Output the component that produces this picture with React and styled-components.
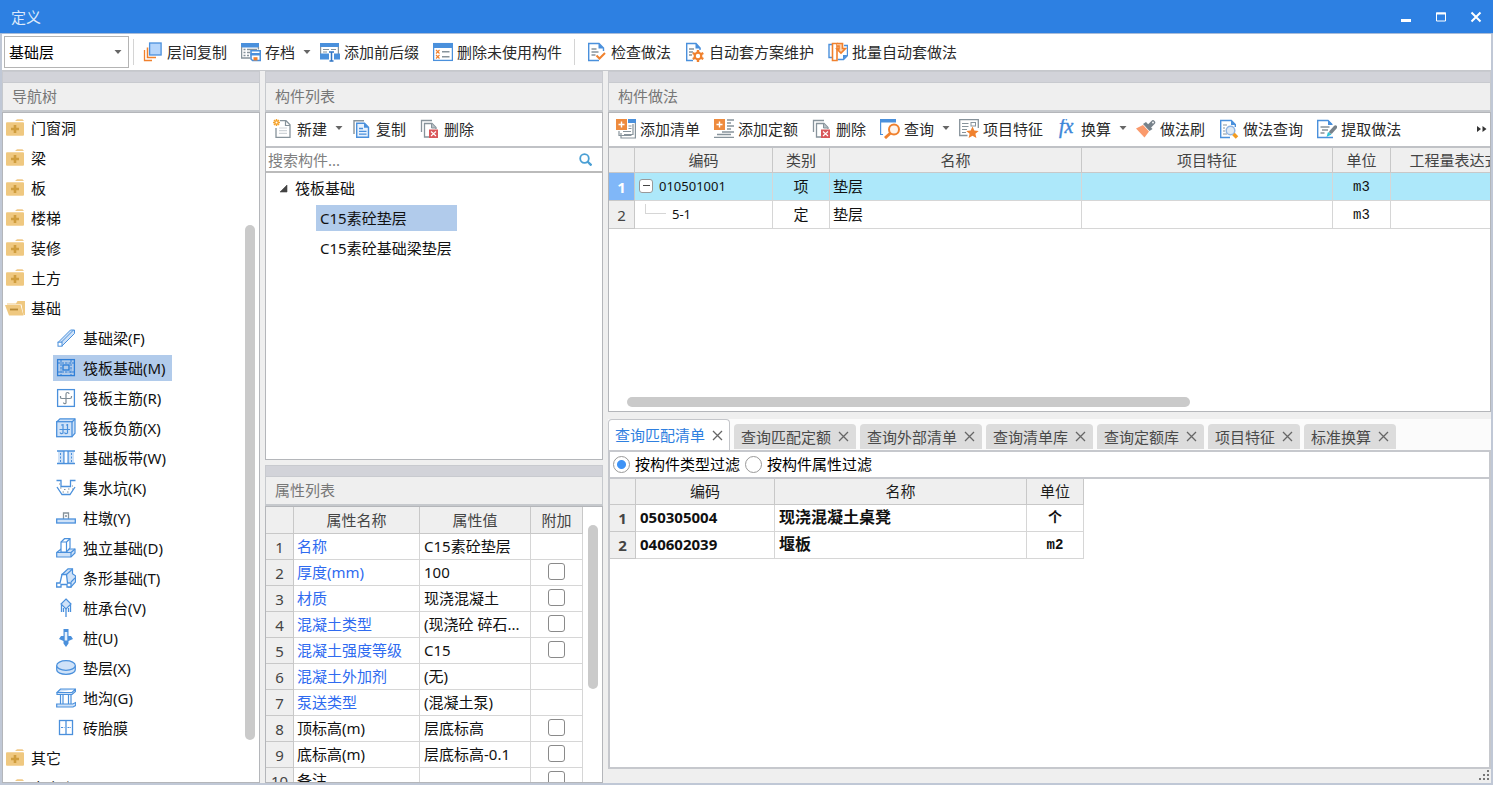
import React, { useState } from 'react'
import styled, { createGlobalStyle } from 'styled-components'

const BLUE = '#4a90dc'
const ORANGE = '#f0812e'
const GRAY = '#87939b'
const PALE = '#cfe2f8'

/* ---------- icons ---------- */

const Svg = ({ size = 20, children }) => (
  <svg width={size} height={size} viewBox="0 0 20 20" fill="none" aria-hidden="true">{children}</svg>
)

const Trash = () => (
  <>
    <path d="M1.5 13V1.5H12" stroke={GRAY} strokeWidth="1.3" />
    <path d="M9 18H4.5V4.5H12L16 8.5V10" stroke={GRAY} strokeWidth="1.3" />
    <path d="M11.5 4.5V9H16" stroke={GRAY} fill="#b9c1c6" />
    <rect x="9" y="10.500" width="9" height="8.500" fill="#d9575b" />
    <path d="M11 12.500l5 4.500M16 12.500l-5 4.500" stroke="#fff" strokeWidth="1.1" />
  </>
)

const icons = {
  floorCopy: (
    <>
      <path d="M1.500 8v10.500H9" stroke={ORANGE} strokeWidth="1.300" />
      <path d="M4.500 5.500V15.500H13" stroke={ORANGE} strokeWidth="1.500" />
      <rect x="6.600" y="1" width="11.500" height="12" fill="#b5d5fb" stroke={BLUE} strokeWidth="1.300" />
    </>
  ),
  archive: (
    <>
      <rect x="0" y="1" width="18" height="4.500" fill={BLUE} />
      <path d="M.6 5v11H9M17.400 5v2.500" stroke={GRAY} strokeWidth="1.300" />
      <path d="M2.500 7.500h2M6 7.500h10M2.500 10.500h2M6 10.500h3M2.500 13.500h2M6 13.500h2" stroke={GRAY} strokeWidth="1.400" />
      <path d="M10 8.800h9.300v9.700h-7.700L10 17z" fill="#fff" stroke={BLUE} strokeWidth="1.600" />
      <path d="M10 13h9v-1.500h-9z" fill={BLUE} stroke={BLUE} />
      <rect x="12.500" y="15.200" width="4" height="3.300" fill={ORANGE} />
    </>
  ),
  affix: (
    <>
      <rect x="0" y="1" width="19" height="4" fill={BLUE} />
      <path d="M.6 5v7M18.400 5v7" stroke={GRAY} strokeWidth="1.200" />
      <path d="M3 7.500h6M11 7.500h5M3 10h4" stroke={GRAY} strokeWidth="1.200" />
      <rect x="0" y="11.500" width="9" height="6" fill={BLUE} />
      <rect x="14" y="11.500" width="6" height="6" fill={BLUE} />
      <path d="M9 10h5M11.500 10v9M9.500 19h4" stroke="#2f74c4" strokeWidth="1.500" />
    </>
  ),
  unused: (
    <>
      <rect x=".6" y="1.600" width="18.800" height="16.800" stroke={BLUE} strokeWidth="1.300" />
      <rect x="0" y="1" width="20" height="5" fill={BLUE} />
      <path d="M3 8l3.500 3.500M6.500 8L3 11.500M3 13l3.500 3.500M6.500 13L3 16.500" stroke={ORANGE} strokeWidth="1.100" />
      <path d="M9 9.700h7.500M9 14.700h7.500" stroke={GRAY} strokeWidth="1.400" />
    </>
  ),
  check: (
    <>
      <path d="M16.500 9V6L12 1.500H1.700v17H12" stroke={BLUE} strokeWidth="1.400" />
      <path d="M11.500 1v5.500H17z" fill={BLUE} />
      <path d="M4.500 7h5M4.500 10h7M4.500 13h4" stroke={GRAY} strokeWidth="1.300" />
      <path d="M9.500 13.500l3 3 5.500-5.500" stroke={ORANGE} strokeWidth="2" />
    </>
  ),
  scheme: (
    <>
      <path d="M15 8V6l-4-4.500H1.700v17H8" stroke={BLUE} strokeWidth="1.400" />
      <path d="M10.500 1v5.500H16z" fill={BLUE} />
      <path d="M4 7h5M4 10h4M4 13h3" stroke={GRAY} strokeWidth="1.300" />
      <circle cx="13" cy="14" r="3.300" stroke={ORANGE} strokeWidth="2.200" />
      <path d="M13 8v2.500M13 17.500V20M7.800 11l2.200 1.300M16 15.700l2.300 1.300M7.800 17l2.200-1.300M16 12.300l2.300-1.300" stroke={ORANGE} strokeWidth="2.400" />
    </>
  ),
  batch: (
    <>
      <path d="M4 2.500h-3v13h3" stroke={BLUE} strokeWidth="1.400" />
      <path d="M16 3.500h3.500v10l-4 4H9.500" stroke={BLUE} strokeWidth="1.400" />
      <path d="M19.500 13H15v4.500z" fill={BLUE} />
      <path d="M4.500 1.500h4.500v17H4.500z" stroke={ORANGE} strokeWidth="1.600" />
      <path d="M9 1.500h5.500v5h3l-4.500 4.500-4-4h2V4H9" stroke={ORANGE} strokeWidth="1.600" fill="#fbd2b0" />
    </>
  ),
  create: (
    <>
      <path d="M7 1.700h6l4 4v12.600H3V9" stroke={GRAY} strokeWidth="1.300" />
      <path d="M12.500 2v4.500H17" stroke={GRAY} strokeWidth="1.200" />
      <path d="M6 9h8M6 11.700h8M6 14.400h8" stroke="#cfd4d8" strokeWidth="1.200" />
      <path d="M3.500 0v7M0 3.500h7M1 1l5 5M6 1L1 6" stroke="#f5a32c" strokeWidth="1.500" />
      <circle cx="3.500" cy="3.500" r="1" fill="#fff" />
    </>
  ),
  copy: (
    <>
      <path d="M2 15V1.700h10" stroke={GRAY} strokeWidth="1.400" />
      <path d="M4.700 4.200h7.800l4 4v10.100H4.700z" fill="#e8f2fd" stroke={BLUE} strokeWidth="1.400" />
      <path d="M12 4v4.700h4.700z" fill={BLUE} />
      <path d="M7 9.500h4M7 12.300h7.500M7 15.100h7.500" stroke={BLUE} strokeWidth="1.300" />
    </>
  ),
  remove: <Trash />,
  addList: (
    <>
      <rect x="12" y="0" width="8" height="4" fill={BLUE} />
      <path d="M17 5v10.500H8M19.400 4v15H5V14" stroke={GRAY} strokeWidth="1.200" />
      <path d="M3 12v4.500h12.500" stroke={GRAY} strokeWidth="1.200" />
      <path d="M12.500 7h3M12.500 9.500h3M7 12.500h8" stroke={GRAY} strokeWidth="1.100" />
      <rect x="0" y="0" width="11" height="11" fill="#ee8b3e" />
      <path d="M5.500 2.500v6M2.500 5.500h6" stroke="#fff" strokeWidth="1.400" />
    </>
  ),
  addQuota: (
    <>
      <path d="M13 1h7M13 4h4M13 7h7M13 10h4M8 13h12M3 15.500h14M0 18.300h20" stroke={GRAY} strokeWidth="1.300" />
      <rect x="0" y="0" width="11" height="11" fill="#ee8b3e" />
      <path d="M5.500 2.500v6M2.500 5.500h6" stroke="#fff" strokeWidth="1.400" />
    </>
  ),
  query: (
    <>
      <rect x="0" y="0" width="16" height="3.500" fill={BLUE} />
      <path d="M.6 3v12.500H3" stroke={BLUE} strokeWidth="1.200" />
      <circle cx="14" cy="10.500" r="5" stroke={ORANGE} strokeWidth="2" fill="#fff4eb" />
      <path d="M10.500 14l-5.500 5" stroke={ORANGE} strokeWidth="3" />
    </>
  ),
  feature: (
    <>
      <path d="M8.500 16.500H.7V.7h18.600V9" stroke={GRAY} strokeWidth="1.300" />
      <path d="M3 4.500h6.500M3 7.500h6.500M3 10.500h5M3 13.500h4" stroke={GRAY} strokeWidth="1.200" />
      <rect x="12" y="3.500" width="4.500" height="3.500" stroke={GRAY} />
      <path d="M13.500 7.500l1.800 4 4.400.4-3.300 2.900 1 4.300-3.900-2.300-3.900 2.300 1-4.300-3.300-2.900 4.400-.4z" fill={ORANGE} />
    </>
  ),
  fx: (
    <text x="2" y="14" fill="#3c86d8" stroke="#3c86d8" strokeWidth=".4" fontFamily="Liberation Serif, serif" fontStyle="italic" fontSize="20">fx</text>
  ),
  brush: (
    <>
      <path d="M0 9.500l7-3.500 6 6.500-4.500 6z" fill="#fa9a6c" />
      <path d="M7 5l3-2 6.500 7-3 2z" fill="#77828a" />
      <path d="M13 7.500L17 3.500" stroke="#77828a" strokeWidth="4.500" strokeLinecap="round" />
      <circle cx="17" cy="3.500" r=".9" fill="#fff" />
    </>
  ),
  workQuery: (
    <>
      <path d="M16.300 8V5.500l-4-4H1.700v17H11" stroke={BLUE} strokeWidth="1.400" />
      <path d="M12 1v5h5z" fill={BLUE} />
      <path d="M4 6h4M4 9h2M4 12h2M4 15h4" stroke={GRAY} strokeWidth="1.200" />
      <circle cx="11.500" cy="11.500" r="4.300" fill="#dfe9f4" stroke="#8fb4e2" strokeWidth="1.500" />
      <path d="M14.500 15l3.500 3.500" stroke="#f29a1f" strokeWidth="3.500" />
    </>
  ),
  extract: (
    <>
      <path d="M15 5.500l-4-4H.7v17H16" stroke={BLUE} strokeWidth="1.400" />
      <path d="M11 1v5h5z" fill={BLUE} />
      <path d="M3.500 8h9M5 11h6M3.500 14h4" stroke={GRAY} strokeWidth="1.300" />
      <path d="M14 13l4.500-5" stroke="#77828a" strokeWidth="3.500" strokeLinecap="round" />
      <path d="M9.500 18l1.500-5 3.500 2.500z" fill="#2cc4d6" />
    </>
  ),
  folder: (
    <>
      <path d="M10 3l2-1.700h5.500L19 3z" fill="#f0c987" />
      <rect x="1" y="4.200" width="18" height="13.500" rx="1" fill="#efc880" />
      <path d="M10 7v8M6 11h8" stroke="#cf9d3e" strokeWidth="2.600" />
    </>
  ),
  folderOpen: (
    <>
      <path d="M2 5.500h9l1.500-2.500H20v14h-1.500L16.500 6.500H2z" fill="#efc880" />
      <path d="M0 7h15.500l3 10.500H4z" fill="#efc880" />
      <path d="M5 11.500h8" stroke="#b88a36" strokeWidth="1.800" />
    </>
  ),
  beam: (
    <>
      <path d="M2 14.500L14.500 2h4v3.500L6 18" fill={PALE} stroke={BLUE} />
      <path d="M5 14.500L17.500 2" stroke={BLUE} />
      <rect x="2" y="14.200" width="4" height="4" fill="#fff" stroke={BLUE} />
    </>
  ),
  raft: (
    <>
      <rect x="1.600" y="1.600" width="16.800" height="16" stroke="#2f7fd8" strokeWidth="1.300" />
      <path d="M5 2v15M15 2v15M2 5h16M2 14h16" stroke="#2f7fd8" strokeDasharray="2.500 1" />
      <rect x="7" y="7" width="6" height="5" stroke="#2f7fd8" strokeWidth="1.400" />
    </>
  ),
  mainBar: (
    <>
      <rect x="1.600" y="1.600" width="16.800" height="16.800" fill="#fff" stroke={BLUE} strokeWidth="1.300" />
      <path d="M10 15.500V6q0-1.500 1.500-1.500T13 6M4.500 8v1.500q0 1 1.500 1h8q1.500 0 1.500-1.500V8M7.500 14.500q0 1.500 2.500 1" stroke="#7e8c96" strokeWidth="1.200" />
    </>
  ),
  negBar: (
    <>
      <path d="M.7 4L4 .8h15v14.400l-3 3.500" fill={PALE} stroke={BLUE} strokeWidth="1.200" />
      <rect x=".7" y="3.700" width="15.300" height="15" fill={PALE} stroke={BLUE} strokeWidth="1.300" />
      <path d="M16 4l3-3M7 6v9q-2 1.500-3-.5M11.500 6v9q-2 1.500-3-.5M3.500 11.500H14M5 7h2M10 7h1.500" stroke={BLUE} strokeWidth="1.200" />
    </>
  ),
  strip: (
    <>
      <rect x="2" y="3" width="16" height="12.500" fill={PALE} />
      <path d="M1 3h18M1 15.500h18M8 3v12.500M12 3v12.500" stroke={BLUE} strokeWidth="1.400" />
      <path d="M4.500 5v10M15.500 5v10" stroke={BLUE} strokeDasharray="2 1.500" />
      <rect x="8.700" y="3.700" width="2.600" height="11" fill="#fff" />
    </>
  ),
  pit: (
    <>
      <path d="M.5 2.500H5v6h9.500v-6h5M1 9l5 7.500h8L19 9" stroke={BLUE} strokeWidth="1.300" />
      <path d="M3 6h1M4 10h1.500M8 11.500h1.500M12 11h1.500M16 8h1M6.500 14h1.500M11 14h1.500M16 11h1" stroke={GRAY} />
    </>
  ),
  pier: (
    <>
      <path d="M7.500 11V5h5v6M9 8h2" stroke={GRAY} strokeWidth="1.300" />
      <rect x=".7" y="11" width="18.600" height="4" fill={PALE} stroke={BLUE} strokeWidth="1.300" />
    </>
  ),
  isolated: (
    <>
      <path d="M.7 14.500L5 11h14v4l-4 4H.7z" fill={PALE} stroke={BLUE} strokeWidth="1.200" />
      <path d="M.7 14.500H15V19M15 14.500l4-3.500" stroke={BLUE} strokeWidth="1.200" />
      <path d="M5 14V4L8.500.7H14V10l-3.500 4z" fill="#fff" stroke={BLUE} strokeWidth="1.200" />
      <path d="M5 4h5.500v10M10.500 4L14 .8" stroke={BLUE} strokeWidth="1.200" />
    </>
  ),
  stripBase: (
    <>
      <path d="M5.500 7L12 .8h4.500v5l3 2v6L15 19h-3" fill={PALE} stroke={BLUE} strokeWidth="1.200" />
      <path d="M.7 19v-4H4L6 6.500h4.500l1 8.500H15v4H11v-2.500H5V19z" fill="#fff" stroke={BLUE} strokeWidth="1.300" />
      <path d="M10.500 6.500L16.500 1M15 14l4-4" stroke={BLUE} strokeWidth="1.100" />
    </>
  ),
  cap: (
    <>
      <path d="M10 1l5 5-5 5-5-5z" fill={PALE} stroke={BLUE} strokeWidth="1.200" />
      <path d="M5.500 7v7M10 11v8M14.500 7v7M7.500 10v4M12.500 10v4" stroke={BLUE} strokeWidth="1.300" />
    </>
  ),
  pile: (
    <>
      <path d="M7.500 1h5v7h2.500l2 3-4.500 2v2.500L10 19l-2.500-3.500V13L3 11l2-3h2.500z" fill={BLUE} />
      <path d="M10 4v8.500" stroke="#e7f1fc" strokeWidth="2.600" />
    </>
  ),
  cushion: (
    <>
      <path d="M.7 7.500v4c0 6.500 18.600 6.500 18.600 0v-4" fill={PALE} stroke={BLUE} strokeWidth="1.200" />
      <ellipse cx="10" cy="7.500" rx="9.300" ry="4.800" fill={PALE} stroke={BLUE} strokeWidth="1.200" />
    </>
  ),
  trench: (
    <>
      <path d="M1 4.500L4.500 1h15L16 4.500zM1 4.500v2h15l3.500-3V1" fill={PALE} stroke={BLUE} strokeWidth="1.200" />
      <path d="M4.500 7v9M7 7v9M12.500 7v9M15 6v10" stroke={BLUE} strokeWidth="1.200" />
      <path d="M.7 16h16l3-1.500v3L17 19H.7z" fill={PALE} stroke={BLUE} strokeWidth="1.200" />
    </>
  ),
  brick: (
    <>
      <rect x="3.500" y="2.500" width="13" height="14" stroke={BLUE} strokeWidth="1.300" />
      <path d="M10 2.500v14" stroke={BLUE} strokeWidth="1.300" />
      <path d="M5 9.500h3.500M11.500 9.500H15" stroke={BLUE} strokeWidth="1.200" strokeDasharray="2 .8" />
    </>
  )
}

const Icon = ({ name, size }) => <Svg size={size}>{icons[name]}</Svg>

const Caret = () => (
  <svg width="8" height="5" viewBox="0 0 8 5" aria-hidden="true"><path d="M.5 0h7L4 4z" fill="#666" /></svg>
)

/* ---------- data ---------- */

const mainTools = [
  { icon: 'floorCopy', label: '层间复制' },
  { icon: 'archive', label: '存档', menu: true },
  { icon: 'affix', label: '添加前后缀' },
  { icon: 'unused', label: '删除未使用构件' },
  { separator: true },
  { icon: 'check', label: '检查做法' },
  { icon: 'scheme', label: '自动套方案维护' },
  { icon: 'batch', label: '批量自动套做法' }
]

const listTools = [
  { icon: 'create', label: '新建', menu: true },
  { icon: 'copy', label: '复制' },
  { icon: 'remove', label: '删除' }
]

const workTools = [
  { icon: 'addList', label: '添加清单' },
  { icon: 'addQuota', label: '添加定额' },
  { icon: 'remove', label: '删除' },
  { icon: 'query', label: '查询', menu: true },
  { icon: 'feature', label: '项目特征' },
  { icon: 'fx', label: '换算', menu: true },
  { icon: 'brush', label: '做法刷' },
  { icon: 'workQuery', label: '做法查询' },
  { icon: 'extract', label: '提取做法' }
]

const navTree = [
  { label: '门窗洞' },
  { label: '梁' },
  { label: '板' },
  { label: '楼梯' },
  { label: '装修' },
  { label: '土方' },
  {
    label: '基础',
    children: [
      ['beam', '基础梁(F)'],
      ['raft', '筏板基础(M)'],
      ['mainBar', '筏板主筋(R)'],
      ['negBar', '筏板负筋(X)'],
      ['strip', '基础板带(W)'],
      ['pit', '集水坑(K)'],
      ['pier', '柱墩(Y)'],
      ['isolated', '独立基础(D)'],
      ['stripBase', '条形基础(T)'],
      ['cap', '桩承台(V)'],
      ['pile', '桩(U)'],
      ['cushion', '垫层(X)'],
      ['trench', '地沟(G)'],
      ['brick', '砖胎膜']
    ]
  },
  { label: '其它' },
  { label: '自定义' }
]

const properties = [
  { name: '名称', value: 'C15素砼垫层', linked: true },
  { name: '厚度(mm)', value: '100', linked: true, extra: true },
  { name: '材质', value: '现浇混凝土', linked: true, extra: true },
  { name: '混凝土类型', value: '(现浇砼 碎石...', linked: true, extra: true },
  { name: '混凝土强度等级', value: 'C15', linked: true, extra: true },
  { name: '混凝土外加剂', value: '(无)', linked: true },
  { name: '泵送类型', value: '(混凝土泵)', linked: true },
  { name: '顶标高(m)', value: '层底标高', extra: true },
  { name: '底标高(m)', value: '层底标高-0.1', extra: true },
  { name: '备注', value: '', extra: true }
]

const matches = [
  ['050305004', '现浇混凝土桌凳', '个'],
  ['040602039', '堰板', 'm2']
]

const tabs = ['查询匹配清单', '查询匹配定额', '查询外部清单', '查询清单库', '查询定额库', '项目特征', '标准换算']

/* ---------- parts ---------- */

const Tools = ({ items }) =>
  items.map((item, i) =>
    item.separator ? (
      <Separator key={i} />
    ) : (
      <ToolButton key={item.label} type="button" $menu={item.menu}>
        <Icon name={item.icon} />
        {item.label}
        {item.menu && <MenuMark><Caret /></MenuMark>}
      </ToolButton>
    )
  )

const NavTree = () => {
  const [selected, setSelected] = useState('筏板基础(M)')
  return (
    <TreeList>
      {navTree.map(node => (
        <li key={node.label}>
          <TreeRow>
            <FolderButton type="button">
              <Icon name={node.children ? 'folderOpen' : 'folder'} />
              {node.label}
            </FolderButton>
          </TreeRow>
          {node.children && (
            <TreeList>
              {node.children.map(([icon, label]) => (
                <TreeRow as="li" key={label} $indent={50}>
                  <LeafButton type="button" $selected={selected === label} onClick={() => setSelected(label)}>
                    <Icon name={icon} />
                    {label}
                  </LeafButton>
                </TreeRow>
              ))}
            </TreeList>
          )}
        </li>
      ))}
    </TreeList>
  )
}

const ComponentList = () => {
  const [selected, setSelected] = useState('C15素砼垫层')
  return (
    <ListBody>
      <TreeRow $indent={13}>
        <svg width="9" height="9" viewBox="0 0 9 9" aria-hidden="true"><path d="M8 1v7H1z" fill="#444" stroke="#444" strokeWidth=".6" /></svg>
        <GroupName>筏板基础</GroupName>
      </TreeRow>
      {['C15素砼垫层', 'C15素砼基础梁垫层'].map(name => (
        <TreeRow key={name} $indent={50}>
          <ComponentButton type="button" $selected={selected === name} onClick={() => setSelected(name)}>{name}</ComponentButton>
        </TreeRow>
      ))}
    </ListBody>
  )
}

const PropertyTable = () => (
  <Table $width="317px">
    <colgroup>
      <col width="28" /><col width="126" /><col width="111" /><col width="52" />
    </colgroup>
    <thead>
      <tr>
        <HeadCell $h={27} /><HeadCell>属性名称</HeadCell><HeadCell>属性值</HeadCell><HeadCell>附加</HeadCell>
      </tr>
    </thead>
    <tbody>
      {properties.map((p, i) => (
        <tr key={p.name}>
          <RowHead $h={26}>{i + 1}</RowHead>
          <Cell $linked={p.linked} $tight>{p.name}</Cell>
          <Cell>{p.value}</Cell>
          <Cell $center>{p.extra && <CheckBox type="checkbox" aria-label={`${p.name} 附加`} />}</Cell>
        </tr>
      ))}
    </tbody>
  </Table>
)

const WorkTable = () => (
  <Table $width="910px">
    <colgroup>
      <col width="26" /><col width="138" /><col width="57" /><col width="252" /><col width="251" /><col width="58" /><col width="128" />
    </colgroup>
    <thead>
      <tr>
        <HeadCell $h={25} /><HeadCell>编码</HeadCell><HeadCell>类别</HeadCell><HeadCell>名称</HeadCell>
        <HeadCell>项目特征</HeadCell><HeadCell>单位</HeadCell><HeadCell>工程量表达式</HeadCell>
      </tr>
    </thead>
    <tbody>
      <ActiveRow>
        <RowHead $h={28} $active>1</RowHead>
        <Cell>
          <CodeLine>
            <Toggle type="button" aria-label="折叠">
              <svg width="7" height="1" aria-hidden="true"><rect width="7" height="1" fill="#444" /></svg>
            </Toggle>
            <Code>010501001</Code>
          </CodeLine>
        </Cell>
        <Cell $center>项</Cell><Cell $tight>垫层</Cell><Cell /><Cell $center><Unit>m3</Unit></Cell><Cell />
      </ActiveRow>
      <tr>
        <RowHead $h={28}>2</RowHead>
        <Cell>
          <CodeLine>
            <Elbow />
            <Code>5-1</Code>
          </CodeLine>
        </Cell>
        <Cell $center>定</Cell><Cell $tight>垫层</Cell><Cell /><Cell $center><Unit>m3</Unit></Cell><Cell />
      </tr>
    </tbody>
  </Table>
)

const MatchTable = () => (
  <Table $width="474px">
    <colgroup>
      <col width="26" /><col width="139" /><col width="252" /><col width="57" />
    </colgroup>
    <thead>
      <tr>
        <HeadCell $h={26} /><HeadCell $strong>编码</HeadCell><HeadCell $strong>名称</HeadCell><HeadCell $strong>单位</HeadCell>
      </tr>
    </thead>
    <tbody>
      {matches.map(([code, name, unit], i) => (
        <tr key={code}>
          <RowHead $h={27} $strong>{i + 1}</RowHead>
          <Cell $strong>{code}</Cell>
          <Cell $strong $large>{name}</Cell>
          <Cell $strong $center><Unit>{unit}</Unit></Cell>
        </tr>
      ))}
    </tbody>
  </Table>
)

const App = () => {
  const [tab, setTab] = useState(tabs[0])
  const [filter, setFilter] = useState('type')
  return (
    <Window>
      <GlobalStyle />
      <TitleBar>
        <Title>定义</Title>
        <WindowButton type="button" aria-label="最小化">
          <svg width="12" height="12" viewBox="0 0 12 12"><path d="M1 9.500h10" stroke="#fff" strokeWidth="3" /></svg>
        </WindowButton>
        <WindowButton type="button" aria-label="最大化">
          <svg width="12" height="12" viewBox="0 0 12 12"><path d="M1.500 2h9v8h-9z" fill="none" stroke="#fff" /><path d="M1 2.500h10" stroke="#fff" strokeWidth="2" /></svg>
        </WindowButton>
        <WindowButton type="button" aria-label="关闭">
          <svg width="12" height="12" viewBox="0 0 12 12"><path d="M1.500 1.500l9 9M10.500 1.500l-9 9" stroke="#fff" strokeWidth="2" /></svg>
        </WindowButton>
      </TitleBar>
      <Frame>
        <MainBar>
          <FloorPicker>
            <FloorSelect aria-label="楼层" defaultValue="基础层">
              <option>基础层</option>
            </FloorSelect>
            <Caret />
          </FloorPicker>
          <Separator $first />
          <Tools items={mainTools} />
        </MainBar>
        <Workspace>
          <Panel $basis="258px">
            <PanelStrip />
            <PanelTitle>导航树</PanelTitle>
            <PanelBody $row>
              <NavTree />
              <ScrollTrack $rows="112fr 516fr 42fr"><Thumb /></ScrollTrack>
            </PanelBody>
          </Panel>
          <Column $width="338px">
            <Panel $grow={389}>
              <PanelStrip />
              <PanelTitle>构件列表</PanelTitle>
              <PanelBody>
                <ToolRow><Tools items={listTools} /></ToolRow>
                <SearchBox>
                  <SearchInput type="search" placeholder="搜索构件..." aria-label="搜索构件" />
                  <svg width="13" height="13" viewBox="0 0 13 13" fill="none" aria-hidden="true">
                    <circle cx="5.500" cy="5.500" r="4.300" stroke="#4a9fd4" strokeWidth="1.800" />
                    <path d="M8.500 8.500l4 4" stroke="#4a9fd4" strokeWidth="2.400" />
                  </svg>
                </SearchBox>
                <ComponentList />
              </PanelBody>
            </Panel>
            <Gap $h={5} />
            <Panel $grow={318}>
              <PanelStrip />
              <PanelTitle>属性列表</PanelTitle>
              <PanelBody $row>
                <PropertyTable />
                <Spacer />
                <ScrollTrack $rows="18fr 166fr 94fr"><Thumb /></ScrollTrack>
              </PanelBody>
            </Panel>
          </Column>
          <Column>
            <Panel $grow={341}>
              <PanelStrip />
              <PanelTitle>构件做法</PanelTitle>
              <PanelBody>
                <ToolRow>
                  <Tools items={workTools} />
                  <MoreButton type="button" aria-label="更多">
                    <svg width="10" height="8" viewBox="0 0 10 8"><path d="M0 1l4 3-4 3zM5.500 1l4 3-4 3z" fill="#333" /></svg>
                  </MoreButton>
                </ToolRow>
                <WorkTable />
                <Spacer />
                <HorizontalTrack><Thumb /></HorizontalTrack>
              </PanelBody>
            </Panel>
            <Gap $h={7} />
            <TabPanel>
              <TabBar>
                {tabs.map(name => (
                  <Tab key={name} $active={tab === name}>
                    <TabButton type="button" onClick={() => setTab(name)}>{name}</TabButton>
                    <TabButton type="button" aria-label={`关闭 ${name}`}>
                      <svg width="11" height="11" viewBox="0 0 11 11"><path d="M1 1l9 9M10 1l-9 9" stroke="#666" strokeWidth="1.300" /></svg>
                    </TabButton>
                  </Tab>
                ))}
              </TabBar>
              <TabBody>
                <FilterBar>
                  <RadioLabel>
                    <Radio type="radio" name="filter" checked={filter === 'type'} onChange={() => setFilter('type')} />
                    按构件类型过滤
                  </RadioLabel>
                  <RadioLabel>
                    <Radio type="radio" name="filter" checked={filter === 'prop'} onChange={() => setFilter('prop')} />
                    按构件属性过滤
                  </RadioLabel>
                </FilterBar>
                <MatchTable />
              </TabBody>
            </TabPanel>
            <StatusBar>
              <svg width="11" height="11" viewBox="0 0 11 11" fill="#777" aria-hidden="true">
                <path d="M8 0h2v2H8zM4 4h2v2H4zM8 4h2v2H8zM0 8h2v2H0zM4 8h2v2H4zM8 8h2v2H8z" />
              </svg>
            </StatusBar>
          </Column>
        </Workspace>
      </Frame>
    </Window>
  )
}

export default App

/* ---------- styles ---------- */

const GlobalStyle = createGlobalStyle`
  * { box-sizing: border-box; }
  body {
    margin: 0;
    font-family: "Noto Sans", "Noto Sans CJK SC", sans-serif;
    font-size: 15px;
    line-height: 20px;
    color: #111;
  }
  button, input, select { font: inherit; color: inherit; }
  button { border: 0; padding: 0; background: none; white-space: nowrap; }
  svg { display: block; flex: none; }
`
const Window = styled.div`
  display: flex;
  flex-direction: column;
  height: 100vh;
  overflow: hidden;
`
const TitleBar = styled.header`
  display: flex;
  align-items: center;
  flex: none;
  height: 34px;
  background: #2d80e2;
  border-bottom: 1px solid #a9bcd8;
`
const Title = styled.h1`
  flex: 1;
  margin: 0;
  padding-left: 11px;
  font-size: 15px;
  font-weight: 400;
  color: #dbe9fb;
`
const WindowButton = styled.button`
  display: flex;
  justify-content: center;
  width: 35px;
`
const Frame = styled.div`
  display: flex;
  flex-direction: column;
  flex: 1;
  min-height: 0;
  border: solid #c0c8d6;
  border-width: 0 2px 2px;
  background: #efefef;
`
const MainBar = styled.div`
  display: flex;
  align-items: center;
  gap: 4px;
  flex: none;
  height: 37px;
  padding-left: 2px;
  background: #fff;
  border-bottom: 1px solid #c6c8cc;
`
const FloorPicker = styled.div`
  display: grid;
  grid-template-columns: 125px;
  align-items: center;
  > * { grid-area: 1 / 1; }
  > svg { justify-self: end; margin-right: 7px; pointer-events: none; }
`
const FloorSelect = styled.select`
  appearance: none;
  height: 32px;
  padding: 0 20px 0 4px;
  border: 1px solid #b4b4b4;
  border-radius: 0;
  background: #fff;
  color: #000;
`
const Separator = styled.span`
  width: 1px;
  height: 26px;
  margin: 0 ${p => (p.$first ? 0 : 3)}px;
  background: #d4d4d4;
`
const ToolButton = styled.button`
  display: flex;
  align-items: center;
  gap: 4px;
  flex: none;
  padding: 3px ${p => (p.$menu ? 0 : 5)}px 3px 5px;
  color: #2a2a2a;
`
const MenuMark = styled.span`
  padding-left: 4px;
`
const Workspace = styled.main`
  display: flex;
  gap: 5px;
  flex: 1;
  min-height: 0;
`
const Column = styled.div`
  display: flex;
  flex-direction: column;
  flex: ${p => (p.$width ? `0 0 ${p.$width}` : '1')};
  min-width: 0;
`
const Panel = styled.section`
  display: flex;
  flex-direction: column;
  flex: ${p => (p.$basis ? `0 0 ${p.$basis}` : `${p.$grow} 1 0`)};
  min-height: 0;
`
const PanelStrip = styled.div`
  flex: none;
  height: 12px;
  background: #d2d3d9;
  border: 1px solid #c8cacf;
`
const PanelTitle = styled.h2`
  flex: none;
  height: 29px;
  margin: 0;
  padding: 3px 9px;
  border: solid #c6c9cd;
  border-width: 0 1px 2px;
  font-size: 15px;
  font-weight: 400;
  color: #777;
`
const PanelBody = styled.div`
  display: flex;
  flex-direction: ${p => (p.$row ? 'row' : 'column')};
  flex: 1;
  min-height: 0;
  overflow: hidden;
  background: #fff;
  border: 1px solid #b4b6ba;
`
const Gap = styled.div`
  flex: none;
  height: ${p => p.$h}px;
`
const Spacer = styled.div`
  flex: 1;
`
const TreeList = styled.ul`
  flex: 1;
  margin: 0;
  padding: 0;
  list-style: none;
`
const TreeRow = styled.div`
  display: flex;
  align-items: center;
  height: 30px;
  padding-left: ${p => p.$indent || 2}px;
`
const FolderButton = styled.button`
  display: flex;
  align-items: center;
  gap: 6px;
`
const LeafButton = styled.button`
  display: flex;
  align-items: center;
  gap: 7px;
  height: 26px;
  padding: 0 6px 0 3px;
  background: ${p => (p.$selected ? '#b1cbeb' : 'none')};
`
const GroupName = styled.span`
  padding-left: 7px;
`
const ComponentButton = styled.button`
  height: 26px;
  min-width: 141px;
  padding: 0 4px;
  text-align: left;
  background: ${p => (p.$selected ? '#b1cbeb' : 'none')};
`
const ScrollTrack = styled.div`
  display: grid;
  grid-template-rows: ${p => p.$rows};
  flex: none;
  width: 14px;
  > * { grid-row: 2; width: 10px; }
`
const HorizontalTrack = styled.div`
  display: grid;
  grid-template-columns: 18fr 563fr 300fr;
  grid-template-rows: 10px;
  flex: none;
  height: 14px;
  > * { grid-column: 2; }
`
const Thumb = styled.span`
  border-radius: 5px;
  background: #cacaca;
`
const ToolRow = styled.div`
  display: flex;
  align-items: center;
  gap: 4px;
  flex: none;
  height: 35px;
  padding: 0 0 2px 2px;
  border-bottom: 2px solid #c0c2c6;
`
const MoreButton = styled.button`
  margin: 0 3px 0 auto;
`
const SearchBox = styled.div`
  display: flex;
  align-items: center;
  flex: none;
  height: 25px;
  padding-right: 10px;
  border-bottom: 2px solid #bbb;
`
const SearchInput = styled.input`
  flex: 1;
  min-width: 0;
  height: 20px;
  padding: 0 2px;
  border: 0;
  outline: 0;
  &::placeholder { color: #808080; }
`
const ListBody = styled.div`
  flex: 1;
`
const Table = styled.table`
  flex: none;
  align-self: flex-start;
  width: ${p => p.$width};
  table-layout: fixed;
  border-collapse: separate;
  border-spacing: 0;
`
const HeadCell = styled.th`
  height: ${p => (p.$h ? `${p.$h}px` : 'auto')};
  padding: 0 0 1px;
  border: solid #c8c8c8;
  border-width: 0 1px 1px 0;
  background: #efefef;
  font-weight: 400;
  color: ${p => (p.$strong ? '#1c1c1c' : '#444')};
`
const RowHead = styled.td`
  height: ${p => p.$h}px;
  padding: 0;
  border: solid #c8c8c8;
  border-width: 0 1px 1px 0;
  background: ${p => (p.$active ? '#80b7f8' : '#efefef')};
  color: ${p => (p.$active ? '#fff' : '#444')};
  font-weight: ${p => (p.$active || p.$strong ? 700 : 400)};
  text-align: center;
`
const Cell = styled.td`
  padding: 0 ${p => (p.$center ? 0 : p.$tight ? 3 : 4)}px 2px;
  border: solid #d6d6d6;
  border-width: 0 1px 1px 0;
  overflow: hidden;
  white-space: nowrap;
  color: ${p => (p.$linked ? '#2f6bf0' : '#111')};
  font-size: ${p => (p.$large ? 16 : 15)}px;
  font-weight: ${p => (p.$strong ? 700 : 400)};
  text-align: ${p => (p.$center ? 'center' : 'left')};
`
const ActiveRow = styled.tr`
  background: #ade8fa;
`
const CodeLine = styled.div`
  display: flex;
  align-items: center;
  gap: 6px;
`
const Code = styled.span`
  font-size: 13px;
`
const Unit = styled.span`
  font-family: "Liberation Mono", "Noto Sans CJK SC", monospace;
  font-size: 14px;
`
const Toggle = styled.button`
  display: flex;
  align-items: center;
  justify-content: center;
  width: 14px;
  height: 14px;
  border: 1px solid #999;
  border-radius: 3px;
  background: #fff;
`
const Elbow = styled.span`
  align-self: flex-start;
  width: 21px;
  height: 10px;
  margin-left: 6px;
  border: solid #d6d6d6;
  border-width: 0 0 1px 1px;
`
const CheckBox = styled.input`
  appearance: none;
  display: block;
  width: 17px;
  height: 17px;
  margin: 0 auto;
  border: 1px solid #8a8a8a;
  border-radius: 3px;
  background: #fff;
  &:checked { background: #3f93f5; }
`
const TabPanel = styled.section`
  display: flex;
  flex-direction: column;
  flex: 350 1 0;
  min-height: 0;
`
const TabBar = styled.div`
  display: flex;
  align-items: flex-end;
  gap: 4px;
  flex: none;
  height: 31px;
  background: #fbfbfb;
`
const Tab = styled.div`
  display: flex;
  align-items: center;
  gap: 7px;
  flex: none;
  height: ${p => (p.$active ? 31 : 25)}px;
  margin-bottom: ${p => (p.$active ? 0 : 1)}px;
  padding: 0 ${p => (p.$active ? 6 : 7)}px;
  border: ${p => (p.$active ? 'solid #c4c6ca' : '0')};
  border-width: ${p => (p.$active ? '1px 1px 0' : 0)};
  border-radius: 4px 4px 0 0;
  background: ${p => (p.$active ? '#fff' : '#dcdcdc')};
  color: ${p => (p.$active ? '#2f80e0' : '#4a4a4a')};
`
const TabButton = styled.button``
const TabBody = styled.div`
  flex: 1;
  min-height: 0;
  overflow: hidden;
  background: #fff;
  border: 2px solid #c6c8cd;
`
const FilterBar = styled.div`
  display: flex;
  align-items: center;
  gap: 5px;
  height: 27px;
  padding: 0 0 1px 3px;
  border-bottom: 2px solid #c6c8cd;
`
const RadioLabel = styled.label`
  display: flex;
  align-items: center;
  gap: 5px;
  color: #000;
`
const Radio = styled.input`
  appearance: none;
  width: 17px;
  height: 17px;
  margin: 0;
  border: 1px solid #999;
  border-radius: 50%;
  background: #fff;
  &:checked { background: radial-gradient(circle, #3f93f5 4px, #fff 5px); }
`
const StatusBar = styled.footer`
  display: flex;
  align-items: flex-end;
  justify-content: flex-end;
  flex: none;
  height: 14px;
  padding: 0 1px 2px 0;
`
